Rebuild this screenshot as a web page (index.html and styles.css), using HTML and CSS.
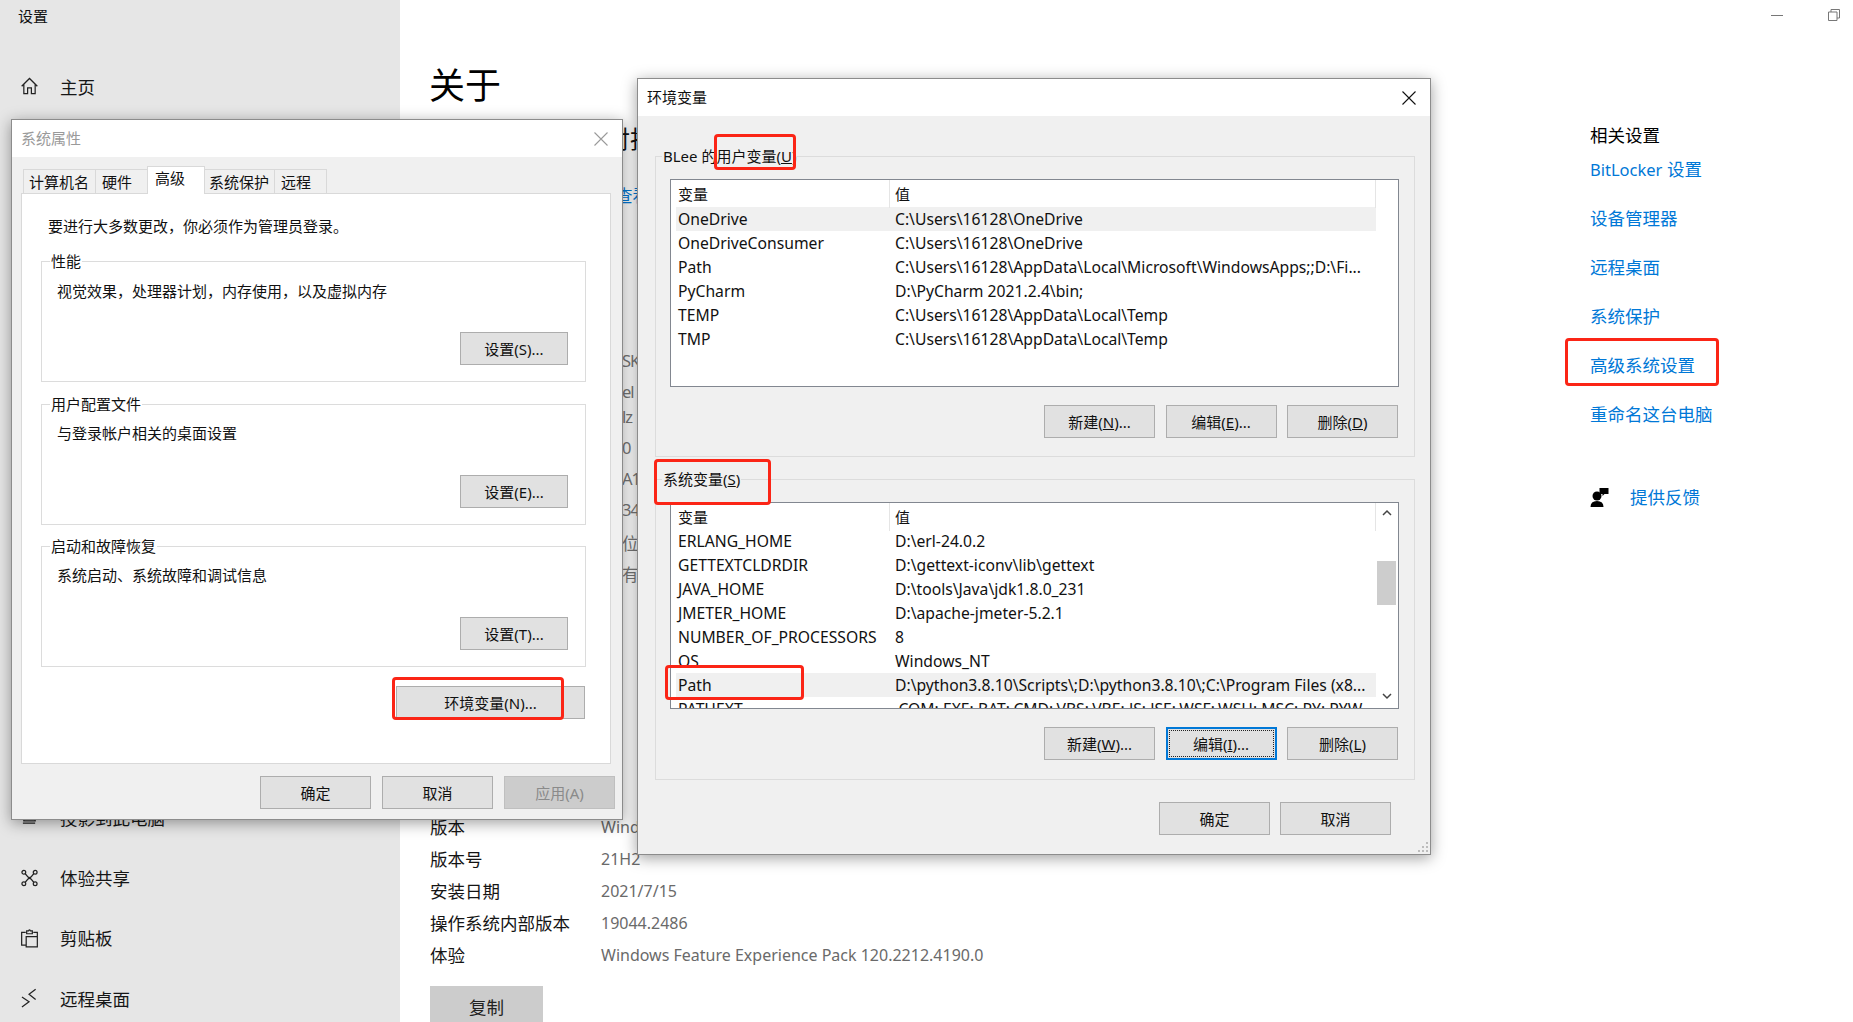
FILE: index.html
```html
<!DOCTYPE html>
<html lang="zh-CN">
<head>
<meta charset="utf-8">
<title>设置</title>
<link rel="stylesheet" href="styles.css">
</head>
<body>
<div class="desktop">
  <aside class="sidebar">
    <div class="app-title">设置</div>
    <div class="nav-row home-row">
      <svg class="nav-icon" viewBox="0 0 18 18"><path d="M.7 9.3 9 1l8.3 8.3M3 7.2V17h4v-6h4v6h4V7.2"/></svg>
      <span>主页</span>
    </div>
    <nav class="nav-list">
      <div class="nav-row">
        <svg class="nav-icon" viewBox="0 0 18 18"><path d="M3 7h12v6H3zM2 15.5h13"/></svg>
        <span>投影到此电脑</span>
      </div>
      <div class="nav-row">
        <svg class="nav-icon" viewBox="0 0 18 18"><circle cx="3" cy="3" r="2"/><circle cx="15" cy="3" r="2"/><circle cx="3" cy="15" r="2"/><circle cx="15" cy="15" r="2"/><path d="M4.5 4.5 7.5 8Q9 9.500 10.500 8l3-3.500M4.500 13.500 7.500 10q1.500-1.500 3 0l3 3.500"/></svg>
        <span>体验共享</span>
      </div>
      <div class="nav-row">
        <svg class="nav-icon" viewBox="0 0 18 20"><path d="M5 4H.7v13.500H5M13 4h4.300v4M5.500 8.500h11.800v11H5.500zM6 4V2.500h2Q9 .5 10 2.500h2V5.500H6z"/></svg>
        <span>剪贴板</span>
      </div>
      <div class="nav-row">
        <svg class="nav-icon" viewBox="0 0 18 20"><path d="M1 9l7.500 5L1 19.500M15.500.7 8.500 6l7 5.500"/></svg>
        <span>远程桌面</span>
      </div>
    </nav>
  </aside>

  <main class="main">
    <h1 class="page-title">关于</h1>
    <div class="peek">
      <div class="peek-head">对抗</div>
      <div class="peek-link">查看</div>
      <div class="peek-row first">SK</div>
      <div class="peek-row">el</div>
      <div class="peek-row tight">lz</div>
      <div class="peek-row">0</div>
      <div class="peek-row">A1</div>
      <div class="peek-row">34</div>
      <div class="peek-row loose">位</div>
      <div class="peek-row">有</div>
    </div>
    <dl class="specs">
      <div class="spec"><dt>版本</dt><dd>Windows 10 专业版</dd></div>
      <div class="spec"><dt>版本号</dt><dd>21H2</dd></div>
      <div class="spec"><dt>安装日期</dt><dd>2021/7/15</dd></div>
      <div class="spec"><dt>操作系统内部版本</dt><dd>19044.2486</dd></div>
      <div class="spec"><dt>体验</dt><dd>Windows Feature Experience Pack 120.2212.4190.0</dd></div>
    </dl>
    <div class="copy-btn">复制</div>
  </main>

  <aside class="related">
    <div class="win-controls">
      <svg class="win-min" viewBox="0 0 12 1"><path d="M0 .5h12"/></svg>
      <svg class="win-restore" viewBox="0 0 12 12"><path d="M.5 3h8.500v8.500H.5zM3 3V.5h8.500V9H9"/></svg>
    </div>
    <div class="related-title">相关设置</div>
    <a class="link"><span class="latin">BitLocker</span> 设置</a>
    <a class="link">设备管理器</a>
    <a class="link">远程桌面</a>
    <a class="link">系统保护</a>
    <a class="link">高级系统设置</a>
    <a class="link">重命名这台电脑</a>
    <div class="feedback">
      <svg class="feedback-icon" viewBox="0 0 18 20"><circle cx="6.500" cy="9" r="4.500"/><path d="M0 20q0-6 6.500-6T13 20zM9 1h9v6h-4l-2 2V7H9z"/></svg>
      <a class="link-inline">提供反馈</a>
    </div>
  </aside>

  <section class="dialog sys-dialog">
    <header class="dialog-bar">
      <span class="dialog-title muted">系统属性</span>
      <svg class="close muted-close" viewBox="0 0 14 14"><path d="M.5.500l13 13M13.500.500l-13 13"/></svg>
    </header>
    <div class="sys-body">
      <div class="tabs">
        <div class="tab tab-a">计算机名</div>
        <div class="tab tab-b">硬件</div>
        <div class="tab tab-c active">高级</div>
        <div class="tab tab-a2">系统保护</div>
        <div class="tab tab-d">远程</div>
      </div>
      <div class="tab-panel">
        <p class="hint">要进行大多数更改，你必须作为管理员登录。</p>
        <div class="group group-first">
          <span class="legend">性能</span>
          <p class="desc">视觉效果，处理器计划，内存使用，以及虚拟内存</p>
          <div class="group-actions"><button class="btn btn-set">设置(S)...</button></div>
        </div>
        <div class="group">
          <span class="legend">用户配置文件</span>
          <p class="desc">与登录帐户相关的桌面设置</p>
          <div class="group-actions"><button class="btn btn-set">设置(E)...</button></div>
        </div>
        <div class="group">
          <span class="legend">启动和故障恢复</span>
          <p class="desc">系统启动、系统故障和调试信息</p>
          <div class="group-actions"><button class="btn btn-set">设置(T)...</button></div>
        </div>
        <div class="env-actions"><button class="btn btn-env">环境变量(N)...</button></div>
      </div>
      <div class="sys-footer">
        <button class="btn btn-foot">确定</button>
        <button class="btn btn-foot">取消</button>
        <button class="btn btn-foot disabled">应用(A)</button>
      </div>
    </div>
  </section>

  <section class="dialog env-dialog">
    <header class="dialog-bar env-bar">
      <span class="dialog-title">环境变量</span>
      <svg class="close" viewBox="0 0 14 14"><path d="M.5.500l13 13M13.500.500l-13 13"/></svg>
    </header>
    <div class="env-body">
      <div class="env-group">
        <span class="legend env-legend">BLee 的用户变量(<u>U</u>)</span>
        <div class="list user-list">
          <div class="table">
            <div class="tr th"><div class="td name">变量</div><div class="td val">值</div></div>
            <div class="tr selected"><div class="td name">OneDrive</div><div class="td val">C:\Users\16128\OneDrive</div></div>
            <div class="tr"><div class="td name">OneDriveConsumer</div><div class="td val">C:\Users\16128\OneDrive</div></div>
            <div class="tr"><div class="td name">Path</div><div class="td val">C:\Users\16128\AppData\Local\Microsoft\WindowsApps;;D:\Fi...</div></div>
            <div class="tr"><div class="td name">PyCharm</div><div class="td val">D:\PyCharm 2021.2.4\bin;</div></div>
            <div class="tr"><div class="td name">TEMP</div><div class="td val">C:\Users\16128\AppData\Local\Temp</div></div>
            <div class="tr"><div class="td name">TMP</div><div class="td val">C:\Users\16128\AppData\Local\Temp</div></div>
          </div>
        </div>
        <div class="env-actions-row">
          <button class="btn btn-env-act">新建(<u>N</u>)...</button>
          <button class="btn btn-env-act">编辑(<u>E</u>)...</button>
          <button class="btn btn-env-act">删除(<u>D</u>)</button>
        </div>
      </div>
      <div class="env-group second">
        <span class="legend env-legend">系统变量(<u>S</u>)</span>
        <div class="list sys-list">
          <div class="table">
            <div class="tr th"><div class="td name">变量</div><div class="td val">值</div></div>
            <div class="tr"><div class="td name">ERLANG_HOME</div><div class="td val">D:\erl-24.0.2</div></div>
            <div class="tr"><div class="td name">GETTEXTCLDRDIR</div><div class="td val">D:\gettext-iconv\lib\gettext</div></div>
            <div class="tr"><div class="td name">JAVA_HOME</div><div class="td val">D:\tools\Java\jdk1.8.0_231</div></div>
            <div class="tr"><div class="td name">JMETER_HOME</div><div class="td val">D:\apache-jmeter-5.2.1</div></div>
            <div class="tr"><div class="td name">NUMBER_OF_PROCESSORS</div><div class="td val">8</div></div>
            <div class="tr"><div class="td name">OS</div><div class="td val">Windows_NT</div></div>
            <div class="tr selected"><div class="td name">Path</div><div class="td val">D:\python3.8.10\Scripts\;D:\python3.8.10\;C:\Program Files (x8...</div></div>
            <div class="tr"><div class="td name">PATHEXT</div><div class="td val">.COM;.EXE;.BAT;.CMD;.VBS;.VBE;.JS;.JSE;.WSF;.WSH;.MSC;.PY;.PYW</div></div>
          </div>
          <div class="scrollbar">
            <svg class="chev" viewBox="0 0 22 20"><path d="M7 12l4-4 4 4"/></svg>
            <div class="thumb"></div>
            <svg class="chev chev-down" viewBox="0 0 22 20"><path d="M7 8l4 4 4-4"/></svg>
          </div>
        </div>
        <div class="env-actions-row">
          <button class="btn btn-env-act">新建(<u>W</u>)...</button>
          <button class="btn btn-env-act focused">编辑(<u>I</u>)...</button>
          <button class="btn btn-env-act">删除(<u>L</u>)</button>
        </div>
      </div>
      <div class="env-footer">
        <button class="btn btn-env-act">确定</button>
        <button class="btn btn-env-act">取消</button>
      </div>
    </div>
    <svg class="grip" viewBox="0 0 12 12"><path d="M9 1h2v2H9zM5 5h2v2H5zM9 5h2v2H9zM1 9h2v2H1zM5 9h2v2H5zM9 9h2v2H9z"/></svg>
  </section>

  <div class="mark mark-env-btn"></div>
  <div class="mark mark-user"></div>
  <div class="mark mark-sys"></div>
  <div class="mark mark-path"></div>
  <div class="mark mark-adv"></div>
</div>
</body>
</html>
```
FILE: styles.css
```css
* { box-sizing: border-box; }
html, body { margin: 0; height: 100%; overflow: hidden; background: #fff; }
body {
  font-family: "Noto Sans", "Noto Sans CJK SC", sans-serif;
  font-size: 15px;
  color: #111;
}
p, h1, dl, dd { margin: 0; }

.desktop {
  position: relative;
  width: 1853px;
  height: 1022px;
  display: grid;
  grid-template-columns: 400px 1190px 263px;
  overflow: hidden;
}

/* sidebar */
.sidebar { background: #e6e6e6; padding: 0 0 0 18px; }
.app-title { height: 33px; line-height: 33px; font-size: 15px; }
.nav-row {
  display: flex;
  align-items: center;
  gap: 21px;
  height: 60.4px;
  font-size: 17.5px;
  color: #161616;
}
.home-row { margin-top: 23px; height: 60px; }
.nav-list { margin-top: 671px; }
.nav-icon {
  width: 21px;
  height: 20px;
  padding: 0 1px 0 3px;
  fill: none;
  stroke: #222;
  stroke-width: 1.300;
  flex: none;
}

/* main */
.main { padding: 61px 0 0 30px; }
.page-title { margin-left: -1px; font-size: 36px; font-weight: 400; line-height: 50px; color: #000; }
.peek { height: 700px; padding-top: 13px; margin-left: 193px; color: #777; font-size: 16.500px; }
.peek-head { height: 30px; margin-left: -17px; line-height: 30px; font-size: 24px; color: #111; white-space: nowrap; }
.peek-link { margin: 27px 0 0 -7px; line-height: 30px; color: #0078d7; }
.peek-row { height: 31px; margin-left: -1px; line-height: 31px; letter-spacing: -1px; }
.peek-row.first { margin-top: 134px; }
.peek-row.tight { margin-top: -6px; }
.peek-row.loose { margin-top: 3px; }
.spec { display: flex; height: 32px; line-height: 32px; font-size: 17.500px; }
.spec dt { width: 171px; color: #141414; }
.spec dd { color: #6a6a6a; font-size: 16px; }
.copy-btn {
  width: 113px;
  height: 50px;
  margin-top: 15px;
  padding-top: 5px;
  background: #ccc;
  text-align: center;
  font-size: 17.500px;
  line-height: 32px;
  color: #222;
}

/* right pane */
.related { display: flex; flex-direction: column; align-items: flex-start; }
.win-controls { display: flex; align-items: center; gap: 45px; height: 30px; padding-left: 181px; }
.win-min { width: 12px; height: 1px; stroke: #777; fill: none; }
.win-restore { width: 12px; height: 12px; stroke: #777; fill: none; }
.related-title { margin-top: 90px; height: 30px; line-height: 30px; font-size: 17.500px; color: #000; }
.link {
  height: 28px;
  line-height: 28px;
  margin-top: 21px;
  font-size: 17.500px;
  color: #0078d7;
}
.latin { font-size: 16.500px; }
.related-title + .link { margin-top: 5px; }
.feedback { display: flex; align-items: center; gap: 21px; margin-top: 54.500px; height: 28px; }
.feedback-icon { width: 19px; height: 20px; fill: #000; }
.link-inline { font-size: 17.500px; color: #0078d7; }

/* dialogs — windows on a desktop */
.dialog {
  position: absolute;
  display: flex;
  flex-direction: column;
  background: #f0f0f0;
  border: 1px solid #8c8c8c;
  box-shadow: 0 3px 14px rgba(0, 0, 0, .38);
}
.sys-dialog { left: 11px; top: 119px; width: 612px; height: 701px; }
.env-dialog { left: 637px; top: 78px; width: 794px; height: 777px; }
.dialog-bar {
  display: flex;
  align-items: center;
  justify-content: space-between;
  flex: none;
  height: 37px;
  padding: 0 14px 0 9px;
  background: #fff;
}
.env-bar { padding-right: 14px; }
.dialog-title { margin-top: -2px; font-size: 15px; color: #111; }
.dialog-title.muted { color: #9a9a9a; }
.close { width: 14px; height: 14px; stroke: #111; fill: none; stroke-width: 1.100; }
.muted-close { stroke: #9a9a9a; }

.sys-body { flex: 1; padding: 10px 9px 0 9px; }
.tabs { display: flex; align-items: flex-end; height: 27px; position: relative; z-index: 1; margin-bottom: -1px; }
.tab {
  height: 25px;
  padding-left: 6px;
  line-height: 24px;
  border: 1px solid #d9d9d9;
  border-bottom: 0;
  margin-right: -1px;
  font-size: 15px;
}
.tab-a { width: 73px; margin-left: 2px; padding-left: 5px; }
.tab-b { width: 53px; }
.tab-c { width: 58px; padding-left: 7px; }
.tab-a2 { width: 71px; padding-left: 4px; }
.tab-d { width: 53px; padding-left: 6px; }
.tab.active { height: 28px; background: #fff; line-height: 22px; padding-bottom: 4px; }
.tab-panel {
  width: 590px;
  height: 571px;
  padding: 22px 0 0 19px;
  background: #fff;
  border: 1px solid #d9d9d9;
}
.hint { height: 20px; padding-left: 7px; line-height: 20px; font-size: 15px; margin-bottom: 25px; }
.group {
  position: relative;
  width: 545px;
  height: 121px;
  padding: 18px 17px 0 15px;
  margin-bottom: 21px;
  border: 1px solid #dcdcdc;
}
.group + .group + .group { margin-bottom: 19px; }
.group-first { padding-top: 19px; margin-bottom: 22px; }
.legend {
  position: absolute;
  left: 8px;
  top: -11px;
  padding: 0 1px;
  line-height: 20px;
  background: #fff;
  font-size: 15px;
}
.desc { height: 20px; line-height: 20px; font-size: 15px; }
.group-actions { display: flex; justify-content: flex-end; margin-top: 32px; }
.group-first .group-actions { margin-top: 31px; }
.btn {
  display: block;
  height: 33px;
  padding: 0;
  background: #e1e1e1;
  border: 1px solid #adadad;
  font: inherit;
  font-size: 15px;
  color: #111;
  line-height: 30px;
}
.btn-set { width: 108px; }
.env-actions { display: flex; justify-content: flex-end; padding-right: 25px; }
.btn-env { width: 189px; }
.sys-footer { display: flex; justify-content: flex-end; gap: 11px; margin: 12px -2px 0 0; }
.btn-foot { width: 111px; }
.btn.disabled { background: #ccc; border-color: #bfbfbf; color: #8a8a8a; }

.env-body { flex: 1; padding: 40px 15px 0 17px; }
.env-group {
  position: relative;
  height: 301px;
  padding: 22px 15px 0 14px;
  border: 1px solid #dcdcdc;
}
.env-group.second { margin-top: 22px; }
.env-legend { left: 6px; top: -11px; background: #f0f0f0; }
.list {
  display: flex;
  height: 208px;
  padding-left: 5px;
  background: #fff;
  border: 1px solid #828790;
  overflow: hidden;
}
.sys-list { height: 207px; }
.table { width: 700px; flex: none; font-size: 15.700px; }
.tr { display: grid; grid-template-columns: 213px 487px; height: 24px; line-height: 24px; white-space: nowrap; }
.tr.th { height: 27px; line-height: 28px; font-size: 15px; }
.sys-list .tr.th { height: 26px; }
.td.name { padding-left: 2px; }
.td.val { padding-left: 6px; }
.th .val { border-left: 1px solid #e5e5e5; padding-left: 5px; border-right: 1px solid #e5e5e5; }
.selected { background: #f0f0f0; }
.scrollbar { display: flex; flex-direction: column; width: 22px; }
.chev { width: 22px; height: 20px; flex: none; fill: none; stroke: #444; stroke-width: 1.500; }
.chev-down { margin-top: auto; margin-bottom: 2px; }
.thumb { width: 19px; height: 44px; margin: 38px 0 0 1px; background: #cdcdcd; }
.env-actions-row { display: flex; justify-content: flex-end; gap: 10.500px; margin: 18px 1px 0 0; }
.btn-env-act { width: 111px; }
.btn.focused {
  border: 2px solid #0078d7;
  outline: 1px dotted #222;
  outline-offset: -4px;
}
.env-footer { display: flex; justify-content: flex-end; gap: 10px; margin: 22px 24px 0 0; }
.grip { position: absolute; right: 1px; bottom: 1px; width: 12px; height: 12px; fill: #bcbcbc; }

/* red annotation boxes */
.mark { position: absolute; border: 3px solid #fb2516; border-radius: 4px; }
.mark-env-btn { left: 392px; top: 677px; width: 172px; height: 43px; }
.mark-user { left: 714px; top: 134px; width: 82px; height: 36px; }
.mark-sys { left: 654px; top: 459px; width: 117px; height: 46px; }
.mark-path { left: 665px; top: 665px; width: 139px; height: 35px; }
.mark-adv { left: 1565px; top: 338px; width: 154px; height: 48px; }
```
